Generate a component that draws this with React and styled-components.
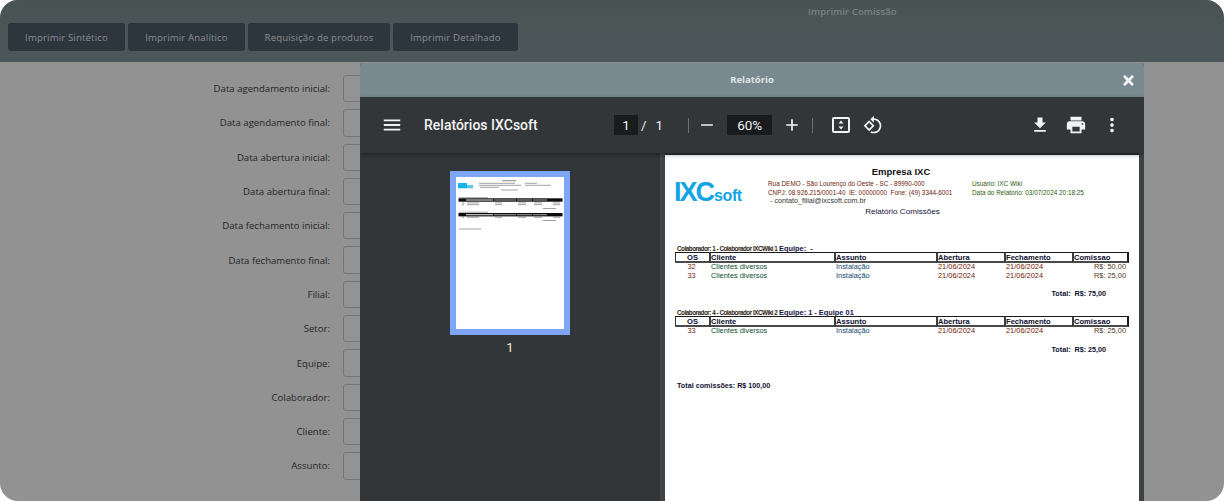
import React from "react";
import styled, { createGlobalStyle } from "styled-components";
import { FaTimes } from "react-icons/fa";

const GlobalStyle = createGlobalStyle`
  html, body {
    margin: 0;
    height: 100%;
    background: #ffffff;
  }
  * {
    box-sizing: border-box;
  }
`;

const ACTIONS = [
  { label: "Imprimir Sintético", width: 117 },
  { label: "Imprimir Analítico", width: 117 },
  { label: "Requisição de produtos", width: 142 },
  { label: "Imprimir Detalhado", width: 125 },
];

const FIELDS = [
  "Data agendamento inicial:",
  "Data agendamento final:",
  "Data abertura inicial:",
  "Data abertura final:",
  "Data fechamento inicial:",
  "Data fechamento final:",
  "Filial:",
  "Setor:",
  "Equipe:",
  "Colaborador:",
  "Cliente:",
  "Assunto:",
];

const COLUMNS = ["OS", "Cliente", "Assunto", "Abertura", "Fechamento", "Comissao"];

const Icon = ({ d, size = 24 }) => (
  <svg width={size} height={size} viewBox="0 0 24 24" fill="#f1f3f4">
    <path d={d} />
  </svg>
);

function Thumbnail() {
  const lines = [
    [46, 3, 14, 1.3], [23, 5.800, 36, 1], [23, 7.800, 42, 1], [24, 9.800, 19, 1],
    [69, 5.800, 12, 1], [69, 7.800, 26, 1], [45, 12.500, 17, 1],
    [3, 20.200, 29, 1], [3, 34.700, 29, 1],
    [6, 25.400, 2, 1], [11, 25.400, 12, 1], [39, 25.400, 7, 1], [62, 25.400, 8, 1], [78, 25.400, 8, 1], [97, 25.400, 7, 1],
    [6, 27.200, 2, 1], [11, 27.200, 12, 1], [39, 27.200, 7, 1], [62, 27.200, 8, 1], [78, 27.200, 8, 1], [97, 27.200, 7, 1],
    [87, 31, 13, 1],
    [6, 39.800, 2, 1], [11, 39.800, 12, 1], [39, 39.800, 7, 1], [62, 39.800, 8, 1], [78, 39.800, 8, 1], [97, 39.800, 7, 1],
    [87, 43, 13, 1], [3, 51.500, 22, 1],
  ];
  const bars = [21.300, 36];
  return (
    <svg width="108" height="152" viewBox="0 0 108 152">
      <rect width="108" height="152" fill="#fff" />
      <rect x="2" y="6" width="9" height="5.300" fill="#19b2ea" />
      <rect x="11" y="8" width="6" height="3.300" fill="#5cc6ee" />
      {lines.map(([x, y, w, h], i) => (
        <rect key={i} x={x} y={y} width={w} height={h} fill="#a2a2a2" />
      ))}
      {bars.map((y) => (
        <g key={y}>
          <rect x="2.500" y={y} width="104" height="3.400" fill="#0c0c0c" />
          <rect x="10" y={y + 1.100} width="27" height="1.200" fill="#c8c8c8" />
          <rect x="38" y={y + 1.100} width="22" height="1.200" fill="#8c8c8c" />
          <rect x="61" y={y + 1.100} width="15" height="1.200" fill="#8c8c8c" />
          <rect x="77" y={y + 1.100} width="14" height="1.200" fill="#8c8c8c" />
        </g>
      ))}
    </svg>
  );
}

function ReportTable({ rows }) {
  return (
    <TableGrid>
      {COLUMNS.map((c, i) => (
        <HeadCell key={c} $first={i === 0} $last={i === COLUMNS.length - 1}>
          {c}
        </HeadCell>
      ))}
      {rows.map((r) => (
        <React.Fragment key={r.os}>
          <Cell $color="#6e1a06" $align="center">{r.os}</Cell>
          <Cell $color="#0a4e34">Clientes diversos</Cell>
          <Cell $color="#18466e">Instalação</Cell>
          <Cell $color="#6e1a06">21/06/2024</Cell>
          <Cell $color="#6e1a06">21/06/2024</Cell>
          <Cell $color="#503424" $align="right">{r.value}</Cell>
        </React.Fragment>
      ))}
    </TableGrid>
  );
}

export default function App() {
  return (
    <>
      <GlobalStyle />
      <Screen>
        <TopBar>
          <ActionRow>
            {ACTIONS.map((a) => (
              <ActionButton key={a.label} $width={a.width}>{a.label}</ActionButton>
            ))}
          </ActionRow>
          <WindowTitle>Imprimir Comissão</WindowTitle>
        </TopBar>

        <Form>
          {FIELDS.map((f) => (
            <React.Fragment key={f}>
              <FieldLabel>{f}</FieldLabel>
              <FieldInput />
            </React.Fragment>
          ))}
        </Form>

        <Modal>
          <ModalTitle>
            Relatório
            <CloseButton><FaTimes size={15} /></CloseButton>
          </ModalTitle>

          <Toolbar>
            <ToolbarLeft>
              <Icon size={22} d="M3 18h18v-2H3v2zm0-5h18v-2H3v2zm0-7v2h18V6H3z" />
              <DocTitle>Relatórios IXCsoft</DocTitle>
            </ToolbarLeft>
            <ToolbarCenter>
              <ValueBox $width={24}>1</ValueBox>
              <PageOf>/</PageOf>
              <PageOf>1</PageOf>
              <Divider $left={23} />
              <IconSlot $left={8}><Icon size={20} d="M19 13H5v-2h14v2z" /></IconSlot>
              <ValueBox $width={45} $left={12}>60%</ValueBox>
              <IconSlot $left={10}><Icon size={20} d="M19 13h-6v6h-2v-6H5v-2h6V5h2v6h6v2z" /></IconSlot>
              <Divider $left={12} />
              <IconSlot $left={16}>
                <Icon d="M5 4h14a2 2 0 0 1 2 2v12a2 2 0 0 1-2 2H5a2 2 0 0 1-2-2V6a2 2 0 0 1 2-2zm0 2v12h14V6H5zm7 1.500L14.500 10.500h-5L12 7.500zm0 9L9.500 13.500h5L12 16.500z" />
              </IconSlot>
              <IconSlot $left={12}>
                <Icon size={20} d="M7.34 6.41L.86 12.9l6.49 6.48 6.49-6.48-6.5-6.49zM3.69 12.9l3.66-3.66L11 12.9l-3.66 3.66-3.65-3.66zm15.67-6.26C17.61 4.88 15.3 4 13 4V.76L8.76 5 13 9.24V6c1.79 0 3.58.68 4.95 2.05 2.73 2.73 2.73 7.17 0 9.9C16.58 19.32 14.79 20 13 20c-.97 0-1.94-.21-2.84-.61l-1.49 1.49C10.02 21.62 11.51 22 13 22c2.3 0 4.61-.88 6.36-2.64 3.52-3.51 3.52-9.21 0-12.72z" />
              </IconSlot>
            </ToolbarCenter>
            <ToolbarRight>
              <ToolSlot><Icon size={20} d="M19 9h-4V3H9v6H5l7 7 7-7zM5 18v2h14v-2H5z" /></ToolSlot>
              <ToolSlot><Icon size={22} d="M19 8H5c-1.660 0-3 1.340-3 3v6h4v4h12v-4h4v-6c0-1.660-1.340-3-3-3zm-3 11H8v-5h8v5zm3-7c-.55 0-1-.45-1-1s.45-1 1-1 1 .45 1 1-.45 1-1 1zm-1-9H6v4h12V3z" /></ToolSlot>
              <ToolSlot><Icon size={22} d="M12 8c1.100 0 2-.9 2-2s-.9-2-2-2-2 .9-2 2 .9 2 2 2zm0 2c-1.100 0-2 .9-2 2s.9 2 2 2 2-.9 2-2-.9-2-2-2zm0 6c-1.100 0-2 .9-2 2s.9 2 2 2 2-.9 2-2-.9-2-2-2z" /></ToolSlot>
            </ToolbarRight>
          </Toolbar>

          <Viewer>
            <Sidebar>
              <ThumbFrame><Thumbnail /></ThumbFrame>
              <ThumbNumber>1</ThumbNumber>
            </Sidebar>
            <PageWell>
              <Page>
                <CompanyName>Empresa IXC</CompanyName>
                <ReportHead>
                  <Logo>IXC<LogoSoft>soft</LogoSoft></Logo>
                  <HeadColumn>
                    <HeadLine>Rua DEMO - São Lourenço do Oeste - SC - 89990-000</HeadLine>
                    <HeadLine>CNPJ: 08.926.215/0001-40&nbsp; IE: 00000000&nbsp; Fone: (49) 3344-6001</HeadLine>
                    <HeadLine $indent={2}>- contato_filial@ixcsoft.com.br</HeadLine>
                  </HeadColumn>
                  <HeadColumn>
                    <HeadLine $color="#2c5a10">Usuário: IXC Wiki</HeadLine>
                    <HeadLine $color="#2c5a10">Data do Relatório: 03/07/2024 20:18:25</HeadLine>
                  </HeadColumn>
                </ReportHead>
                <ReportName>Relatório Comissões</ReportName>

                <Group $top={27}>
                  <GroupLabel>
                    <Collaborator>Colaborador: 1 - Colaborador IXCWiki 1</Collaborator>
                    <Team>Equipe: &nbsp;-</Team>
                  </GroupLabel>
                  <ReportTable rows={[{ os: 32, value: "R$: 50,00" }, { os: 33, value: "R$: 25,00" }]} />
                  <GroupTotal>Total:&nbsp; R$: 75,00</GroupTotal>
                </Group>

                <Group $top={9}>
                  <GroupLabel>
                    <Collaborator>Colaborador: 4 - Colaborador IXCWiki 2</Collaborator>
                    <Team>Equipe: 1 - Equipe 01</Team>
                  </GroupLabel>
                  <ReportTable rows={[{ os: 33, value: "R$: 25,00" }]} />
                  <GroupTotal>Total:&nbsp; R$: 25,00</GroupTotal>
                </Group>

                <GrandTotal>Total comissões: R$ 100,00</GrandTotal>
              </Page>
            </PageWell>
            <Scrollbar />
          </Viewer>
        </Modal>
      </Screen>
    </>
  );
}

const Screen = styled.div`
  position: relative;
  width: 1224px;
  height: 501px;
  overflow: hidden;
  border-radius: 18px;
  background: #929292;
  font-family: "Open Sans", "Noto Sans", sans-serif;
`;

const TopBar = styled.header`
  position: relative;
  height: 62px;
  padding: 23px 8px 0;
  background: linear-gradient(#485354, #4b5758);
`;

const ActionRow = styled.div`
  display: flex;
  gap: 3px;
`;

const ActionButton = styled.button`
  width: ${(p) => p.$width}px;
  height: 28px;
  padding: 0;
  border: 0;
  border-radius: 3px;
  background: #2d353d;
  color: #8a8e92;
  font-family: inherit;
  font-size: 9.600px;
  letter-spacing: 0.15px;
`;

const WindowTitle = styled.div`
  position: absolute;
  top: 5px;
  left: 808px;
  color: #798282;
  font-size: 9.500px;
  font-weight: 600;
  letter-spacing: 0.1px;
`;

const Form = styled.main`
  display: grid;
  grid-template-columns: 330px 160px;
  column-gap: 13px;
  row-gap: 7px;
  padding-top: 13px;
  grid-auto-rows: 27.300px;
`;

const FieldLabel = styled.label`
  display: flex;
  align-items: center;
  justify-content: flex-end;
  color: #262626;
  font-size: 9.600px;
`;

const FieldInput = styled.div`
  border: 1px solid #757575;
  border-radius: 3px;
  background: #939393;
`;

const Modal = styled.section`
  position: absolute;
  top: 63px;
  left: 360px;
  width: 784px;
  height: 438px;
  display: flex;
  flex-direction: column;
  border-radius: 3px 3px 0 0;
  overflow: hidden;
  background: #323639;
`;

const ModalTitle = styled.div`
  position: relative;
  flex: 0 0 34px;
  display: flex;
  align-items: center;
  justify-content: center;
  padding-bottom: 2px;
  background: #788a8f;
  color: #e0e4e5;
  font-size: 9.500px;
  font-weight: 700;
`;

const CloseButton = styled.span`
  position: absolute;
  top: 10px;
  right: 8px;
  display: flex;
  color: #f3f5f6;
`;

const Toolbar = styled.div`
  position: relative;
  z-index: 1;
  flex: 0 0 56px;
  display: grid;
  grid-template-columns: 233px 1fr auto;
  align-items: center;
  padding-left: 21px;
  background: #323639;
  box-shadow: 0 2px 4px rgba(0, 0, 0, 0.35);
  color: #f1f3f4;
  font-family: Roboto, sans-serif;
`;

const ToolbarLeft = styled.div`
  display: flex;
  align-items: center;
  gap: 21px;
`;

const DocTitle = styled.span`
  font-size: 14px;
  font-weight: 500;
`;

const ToolbarCenter = styled.div`
  display: flex;
  align-items: center;
  font-size: 13.500px;
`;

const ValueBox = styled.span`
  display: flex;
  align-items: center;
  justify-content: center;
  width: ${(p) => p.$width}px;
  height: 20px;
  margin-left: ${(p) => p.$left || 0}px;
  background: #191b1c;
`;

const PageOf = styled.span`
  margin-left: 1px;
  padding: 0 2px;
  color: #e8eaed;

  & + & {
    margin-left: 5px;
  }
`;

const Divider = styled.span`
  width: 1px;
  height: 15px;
  margin-left: ${(p) => p.$left}px;
  background: #6c7073;
`;

const IconSlot = styled.span`
  display: flex;
  margin-left: ${(p) => p.$left}px;
  margin-right: -2px;
`;

const ToolbarRight = styled.div`
  display: flex;
  align-items: center;
  gap: 12px;
  padding-right: 20px;
`;

const ToolSlot = styled.span`
  display: flex;
  align-items: center;
  justify-content: center;
  width: 24px;
  height: 24px;
`;

const Viewer = styled.div`
  flex: 1;
  display: flex;
  min-height: 0;
`;

const Sidebar = styled.aside`
  flex: 0 0 300px;
  display: flex;
  flex-direction: column;
  align-items: center;
  padding-top: 18px;
  background: #323639;
`;

const ThumbFrame = styled.div`
  display: flex;
  border: 6px solid #7fa6f5;
`;

const ThumbNumber = styled.div`
  margin-top: 5px;
  color: #efe9c8;
  font-family: Roboto, sans-serif;
  font-size: 13px;
`;

const PageWell = styled.div`
  flex: 1;
  padding: 2px 0 0 5px;
  background: linear-gradient(90deg, #44484a, #44484a 5px, #323639 5px);
`;

const Page = styled.article`
  height: 100%;
  padding: 11px 10px 0;
  overflow: hidden;
  background: #ffffff;
  box-shadow: 0 0 6px rgba(0, 0, 0, 0.25);
  color: #111111;
  font-family: "Liberation Sans", Arial, sans-serif;
  font-size: 7.400px;
`;

const Scrollbar = styled.div`
  flex: 0 0 5px;
  background: #3c4144;
`;

const CompanyName = styled.h1`
  margin: 0;
  padding-right: 2px;
  text-align: center;
  font-size: 9.500px;
  line-height: 12px;
  font-weight: 700;
`;

const ReportHead = styled.div`
  display: grid;
  grid-template-columns: 93px 204px 1fr;
  height: 27px;
  margin-top: 2px;
`;

const Logo = styled.div`
  display: flex;
  align-items: baseline;
  height: 22px;
  margin-left: -1px;
  color: #12a5e6;
  font-size: 27px;
  font-weight: 700;
  line-height: 24px;
  letter-spacing: -2px;
`;

const LogoSoft = styled.span`
  margin-left: 1px;
  font-size: 16px;
  letter-spacing: -0.4px;
`;

const HeadColumn = styled.div`
  padding-top: 0;
`;

const HeadLine = styled.div`
  padding-left: ${(p) => p.$indent || 0}px;
  color: ${(p) => p.$color || "#6e1c0c"};
  font-size: 6.400px;
  line-height: 8.700px;
  white-space: nowrap;

  &:nth-child(3) {
    color: #333333;
    font-size: 7.200px;
  }
`;

const ReportName = styled.div`
  padding-left: 1px;
  text-align: center;
  font-size: 8.100px;
  line-height: 10px;
  color: #14143c;
`;

const Group = styled.section`
  margin-top: ${(p) => p.$top}px;
`;

const GroupLabel = styled.div`
  display: flex;
  align-items: center;
  height: 8px;
  padding-left: 2px;
  white-space: nowrap;
`;

const Collaborator = styled.span`
  width: 102px;
  font-size: 6.300px;
  font-weight: 700;
  letter-spacing: -0.47px;
  color: #2a1a10;
`;

const Team = styled.span`
  font-size: 7.400px;
  font-weight: 700;
  color: #14144a;
`;

const TableGrid = styled.div`
  display: grid;
  grid-template-columns: 34px 125px 102px 68px 68px 57px;
  grid-auto-rows: 8.500px;
  grid-template-rows: 11px;
`;

const HeadCell = styled.div`
  display: flex;
  align-items: center;
  justify-content: ${(p) => (p.$first ? "center" : "flex-start")};
  border-style: solid;
  border-color: #1a1a1a #1a1a1a #4a4a4a #3c3c3c;
  border-width: 1px ${(p) => (p.$last ? 2 : 0)}px 2px ${(p) => (p.$first ? 1 : 2)}px;
  font-size: 7.600px;
  font-weight: 700;
  color: #0e0e30;
`;

const Cell = styled.div`
  display: flex;
  align-items: center;
  justify-content: ${(p) => (p.$align === "center" ? "center" : p.$align === "right" ? "flex-end" : "flex-start")};
  padding: 0 3px 0 2px;
  color: ${(p) => p.$color};
  line-height: 8.500px;
`;

const GroupTotal = styled.div`
  margin-top: 9px;
  padding-left: 376.500px;
  font-weight: 700;
  font-size: 7.200px;
  line-height: 10px;
  color: #101030;
`;

const GrandTotal = styled.div`
  margin-top: 26px;
  padding-left: 2px;
  font-weight: 700;
  font-size: 7.200px;
  line-height: 10px;
  color: #101030;
`;
